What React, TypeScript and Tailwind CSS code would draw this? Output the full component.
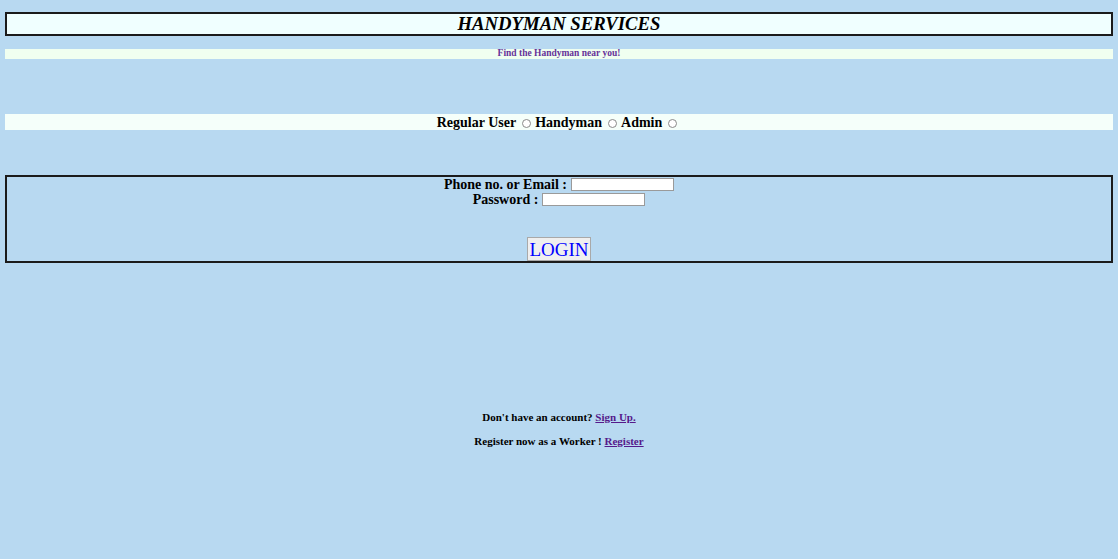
const Radio = () => (
  <span className="inline-block w-[9px] h-[9px] rounded-full border border-[#8a8a8a] bg-white ml-[6px] mr-[4px]" />
);

const App = () => {
  return (
    <div
      className="min-h-[559px] w-full bg-[#b8d9f1] px-[5px] pt-[12px] text-black"
      style={{ fontFamily: '"Liberation Serif", "Times New Roman", serif' }}
    >
      <div className="h-[24px] border-2 border-[#1b1b1b] bg-[#f0ffff] flex items-center justify-center">
        <h3 className="text-[18.72px] font-bold italic leading-none">HANDYMAN SERVICES</h3>
      </div>

      <div className="mt-[13px] h-[10px] bg-[#f0fff0] flex items-center justify-center">
        <h6 className="text-[9.5px] font-bold text-[#663399] leading-none">Find the Handyman near you!</h6>
      </div>

      <div className="mt-[55px] h-[16px] pt-[2px] bg-[#f5fffa] flex items-center justify-center text-[14px] font-bold leading-none">
        <span>Regular User</span>
        <Radio />
        <span>Handyman</span>
        <Radio />
        <span>Admin</span>
        <Radio />
      </div>

      <div className="mt-[45px] h-[88px] border-2 border-[#1b1b1b] flex flex-col items-center text-[14px] font-bold leading-none">
        <div className="flex items-center h-[15px]">
          <span>Phone no. or Email :</span>
          <span className="ml-[4px] w-[103px] h-[13px] bg-white border border-[#9a9a9a]" />
        </div>
        <div className="flex items-center h-[15px]">
          <span>Password :</span>
          <span className="ml-[4px] w-[103px] h-[13px] bg-white border border-[#9a9a9a]" />
        </div>
        <button className="mt-auto w-[64px] h-[24px] bg-[#efefef] border border-[#a9a9a9] text-[#0000ff] text-[19px] font-normal leading-none flex items-center justify-center">
          LOGIN
        </button>
      </div>

      <div className="mt-[149px] flex flex-col items-center text-[11px] font-bold leading-none">
        <p>
          Don't have an account? <a className="underline text-[#551a8b]" href="#">Sign Up.</a>
        </p>
        <p className="mt-[13px]">
          Register now as a Worker ! <a className="underline text-[#551a8b]" href="#">Register</a>
        </p>
      </div>
    </div>
  );
};

export default App;
